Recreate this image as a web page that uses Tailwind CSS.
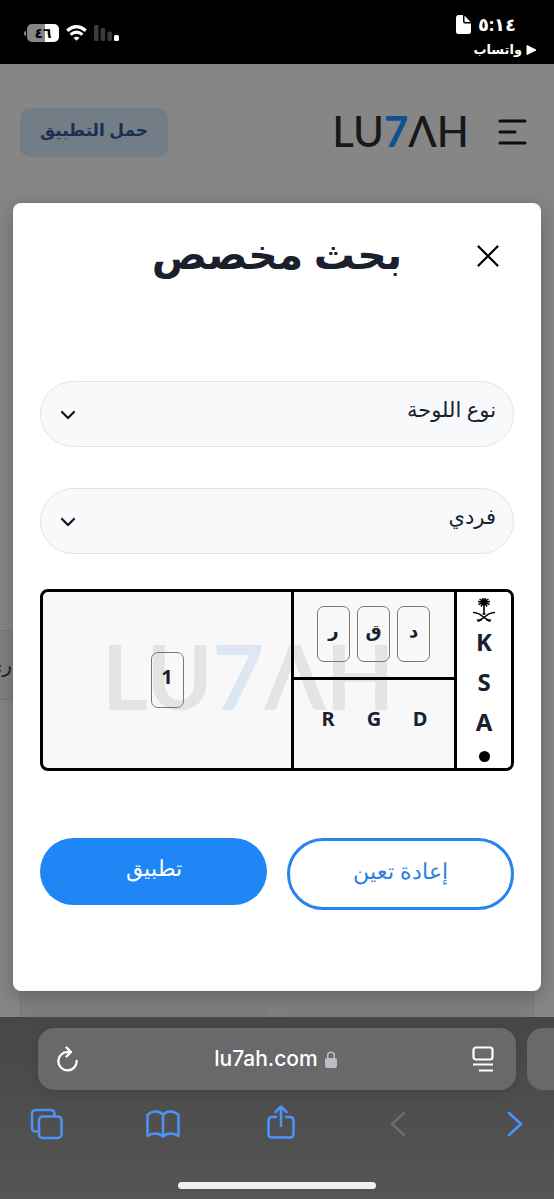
<!DOCTYPE html>
<html lang="ar" dir="rtl">
<head>
<meta charset="utf-8">
<meta name="viewport" content="width=device-width, initial-scale=1">
<title>بحث مخصص</title>
<script src="https://cdn.jsdelivr.net/npm/@tailwindcss/browser@4"></script>
</head>
<body class="flex min-h-screen flex-col bg-[#868686] font-['Noto_Sans','DejaVu_Sans',sans-serif] text-[#1a202c]">

<!-- Status bar -->
<div class="flex h-16 items-start justify-between bg-black pr-[17px] pl-6 text-white">
  <div class="flex flex-col items-start pt-2">
    <div class="flex h-7 items-center gap-[7px] pt-1 pr-[21px]">
      <span class="text-lg leading-7 font-bold">٥:١٤</span>
      <svg class="h-[19px] w-[15px]" viewBox="0 0 15 19" fill="#fff"><path d="M3 0h4v6.500q0 2 2 2h6v8q0 2.500-2.500 2.500h-10Q0 19 0 16.500V3Q0 0 3 0z"/><path d="M8.500 0.500L14.500 7H9.500q-1 0-1-1z"/></svg>
    </div>
    <div class="flex h-7 items-center gap-1">
      <svg class="h-[10px] w-[11px]" viewBox="0 0 11 10" fill="#fff"><path d="M1 .5L10 5L1 9.500z" stroke="#fff" stroke-linejoin="round"/></svg>
      <span class="text-[13px] font-bold">واتساب</span>
    </div>
  </div>
  <div class="flex h-16 items-center gap-[7px] pt-[2px]" dir="ltr">
    <div class="flex items-center gap-px">
      <span class="h-[5px] w-[2px] rounded-l bg-[#868686]"></span>
      <span class="flex h-[18px] w-8 items-center justify-center rounded-[5px] bg-linear-to-r from-[#868686] from-55% to-white to-55% text-sm font-bold text-black">٤٦</span>
    </div>
    <svg class="h-4 w-[21px]" viewBox="0 0 21 16" fill="none" stroke="#fff" stroke-width="3.200"><path d="M1.200 5.700Q10.500-2.300 19.800 5.700M4.600 9.600Q10.500 4.600 16.400 9.600"/><path d="M7.500 12.700Q10.500 10.600 13.500 12.700L10.500 15.800z" fill="#fff" stroke="none"/></svg>
    <svg class="h-4 w-[25px]" viewBox="0 0 25 16"><g fill="#3b3b3b"><rect width="4.500" height="16" rx="1.500"/><rect x="6.700" y="3" width="4.500" height="13" rx="1.500"/><rect x="13.400" y="6.500" width="4.500" height="9.500" rx="1.500"/></g><rect x="20" y="10" width="5" height="6" rx="1.500" fill="#fff"/></svg>
  </div>
</div>

<!-- Page with open dialog -->
<div class="relative flex-1 pb-[26px]">
  <div class="absolute top-[566px] left-0 flex h-[70px] w-8 items-center border-y border-[#777] bg-[#828282] text-xl whitespace-nowrap" aria-hidden="true"><span class="absolute right-5">ري</span></div>
  <div class="absolute inset-x-5 bottom-0 h-16 border-x border-[#7a7a7a] bg-[#808080] px-3 pt-14"><div class="grid h-2 grid-cols-2 gap-5"><span class="bg-[#7c7c7c]"></span><span class="bg-[#7c7c7c]"></span></div></div>

  <header class="flex h-[139px] items-center justify-between px-5 pb-[3px]">
    <div class="flex items-center gap-[29px] pr-[7px]">
      <button aria-label="القائمة" class="h-[26px] w-[29px]"><svg viewBox="0 0 29 26" fill="none" stroke="#0b0d14" stroke-width="3" stroke-linecap="round"><path d="M2 2h25M2 13h15M2 24h25"/></svg></button>
      <a href="#" dir="ltr" class="pb-[3px] font-['Lato','Inter',sans-serif] text-[42px] leading-[44px] font-medium text-[#181818]">LU<span class="font-bold text-[#104f91]">7</span>ΛH</a>
    </div>
    <button class="h-[49px] w-[148px] rounded-[10px] bg-[#737d86] pb-1 text-[17px] font-bold text-[#19304f]">حمل التطبيق</button>
  </header>

  <main role="dialog" aria-labelledby="title" class="relative mx-[13px] rounded-lg bg-white px-[27px] pb-[81px] shadow-[0_5px_20px_rgba(0,0,0,0.25)]">
    <div class="grid h-[178px] grid-cols-[52px_1fr_52px] items-start pt-[25px]">
      <button aria-label="إغلاق" class="flex h-14 items-center justify-center"><svg class="size-[22px]" viewBox="0 0 22 22" fill="none" stroke="#000" stroke-width="2.200" stroke-linecap="round"><path d="M1.500 1.500l19 19M20.500 1.500L1.500 20.500"/></svg></button>
      <h1 id="title" class="text-center text-[41px] leading-[50px] font-bold">بحث مخصص</h1>
    </div>

    <form>
      <div class="relative">
        <select aria-label="نوع اللوحة" class="h-[66px] w-full appearance-none rounded-full border border-[#e2e4ea] bg-[#f7f9fb] pr-[17px] pb-2 pl-12 text-[21px]"><option>نوع اللوحة</option></select>
        <svg class="pointer-events-none absolute top-[29px] left-5 h-[10px] w-4" viewBox="0 0 16 10" fill="none" stroke="#11141c" stroke-width="2.200" stroke-linecap="round" stroke-linejoin="round"><path d="M2 2l6 6 6-6"/></svg>
      </div>
      <div class="relative mt-[41px]">
        <select aria-label="الفئة" class="h-[66px] w-full appearance-none rounded-full border border-[#e2e4ea] bg-[#f7f9fb] pr-[17px] pb-2 pl-12 text-[21px]"><option>فردي</option></select>
        <svg class="pointer-events-none absolute top-[29px] left-5 h-[10px] w-4" viewBox="0 0 16 10" fill="none" stroke="#11141c" stroke-width="2.200" stroke-linecap="round" stroke-linejoin="round"><path d="M2 2l6 6 6-6"/></svg>
      </div>

      <!-- Licence plate -->
      <div dir="ltr" class="relative mt-[35px] grid h-[182px] grid-cols-[minmax(0,1fr)_163px_57px] overflow-hidden rounded-lg border-3 border-black bg-[#f8f8f8] font-bold">
        <div class="pointer-events-none absolute top-[40px] left-[59px] font-['Lato','Inter',sans-serif] text-[89px] leading-[88px] font-bold text-black/8" aria-hidden="true">LU<span class="text-[#1d76c5]/12">7</span>ΛH</div>
        <div class="relative flex items-center justify-center">
          <input aria-label="الأرقام" value="1" class="h-14 w-[33px] rounded-[7px] border border-[#777] bg-transparent pb-2 text-center text-xl">
        </div>
        <div class="relative grid grid-rows-[88px_1fr] border-l-3 border-black">
          <div class="flex items-center justify-center gap-[7px] border-b-3 border-black pr-px pb-px">
            <input aria-label="الحرف الثالث" value="ر" class="h-14 w-[33px] rounded-[7px] border border-[#777] bg-transparent pb-2 text-center text-lg">
            <input aria-label="الحرف الثاني" value="ق" class="h-14 w-[33px] rounded-[7px] border border-[#777] bg-transparent pb-2 text-center text-lg">
            <input aria-label="الحرف الأول" value="د" class="h-14 w-[33px] rounded-[7px] border border-[#777] bg-transparent pb-2 text-center text-lg">
          </div>
          <div class="flex items-center justify-center gap-5 pb-[10px] text-center text-xl"><span class="w-[26px]">R</span><span class="w-[26px]">G</span><span class="w-[26px]">D</span></div>
        </div>
        <div class="relative flex flex-col items-center border-l-3 border-black bg-white pt-[6px] text-2xl leading-10">
          <svg class="h-6 w-[22px] shrink-0" viewBox="0 0 22 24" fill="none" stroke="#000"><path d="M11 5v11" stroke-width="1.600"/><path d="M11 4L5 3.500M11 4L5.500 6.500M11 4L8 8.500M11 4L6.500 1M11 4L9.500 0M11 4L12.500 0M11 4L15.500 1M11 4L17 3.500M11 4L16.500 6.500M11 4L14 8.500" stroke-width="1.400"/><circle cx="11" cy="4" r="3.300" fill="#000" stroke="none"/><path d="M9.500 16h3" stroke-width="1.500"/><path d="M0 14.500Q5 14.500 9 18T16.500 22.500M22 14.500Q17 14.500 13 18T5.500 22.500" stroke-width="1.600"/><path d="M4 21.500l2.500 2M18 21.500l-2.500 2M9 21.500l-4.500 1.500M13 21.500l4.500 1.500" stroke-width="1.400"/></svg>
          <span>K</span><span>S</span><span>A</span>
          <i class="mt-[9px] size-[11px] shrink-0 rounded-full bg-black"></i>
        </div>
      </div>

      <div class="mt-[67px] grid grid-cols-2 items-start gap-5">
        <button type="reset" class="h-[72px] rounded-full border-3 border-[#2684ec] pb-2 text-[22px] font-light text-[#2b7fe0]">إعادة تعين</button>
        <button type="button" class="h-[67px] rounded-full bg-[#1e86f5] pb-2 text-[22px] font-light text-white">تطبيق</button>
      </div>
    </form>
  </main>
</div>

<!-- Browser toolbar -->
<footer dir="ltr" class="relative flex h-[182px] flex-col overflow-hidden bg-linear-to-b from-[#474749] to-[#555] pt-[11px]">
  <div class="flex gap-[11px] pl-[38px]">
    <div class="flex h-[62px] flex-1 items-center justify-between rounded-2xl bg-[#69696b] px-[18px] text-white shadow-[0_2px_12px_rgba(0,0,0,0.15)]">
      <button aria-label="إعادة التحميل"><svg class="h-[26px] w-[23px]" viewBox="0 0 23 26" fill="none" stroke="#fff" stroke-width="2.300" stroke-linecap="round" stroke-linejoin="round"><path d="M15 6H11.500A9.200 9.200 0 1 0 20.700 15M10.500 1.500L15 6L10.500 10.500"/></svg></button>
      <div class="flex items-center gap-[7px] font-['Inter',sans-serif] text-[21px] font-medium">lu7ah.com
        <svg class="h-[17px] w-3" viewBox="0 0 12 17"><rect y="7" width="12" height="10" rx="2" fill="#bcbcc2"/><path d="M2.700 8V4.500a3.300 3.300 0 0 1 6.600 0V8" fill="none" stroke="#bcbcc2" stroke-width="1.500"/></svg>
      </div>
      <button aria-label="إعدادات الصفحة" class="mr-1"><svg class="h-[26px] w-[22px]" viewBox="0 0 22 26" fill="none" stroke="#fff" stroke-width="2.200"><rect x="1.500" y="1.500" width="19" height="12" rx="2.500"/><path d="M1 18.500h20M7 24.500h14"/></svg></button>
    </div>
    <div class="h-[62px] w-[27px] rounded-l-2xl bg-[#69696b]"></div>
  </div>
  <nav class="mt-4 flex h-9 items-center justify-between pr-[22px] pl-[29px]">
    <button class="flex w-[34px] justify-center" aria-label="علامات التبويب"><svg class="h-8 w-[33px]" viewBox="0 0 33 32" fill="none" stroke="#4b93f8" stroke-width="2.500"><path d="M8.500 23.500H6Q2 23.500 2 19.500V6Q2 2 6 2H20.500Q24.500 2 24.500 6V8.500"/><rect x="9" y="8.500" width="22.500" height="21.500" rx="3.500"/></svg></button>
    <button class="flex w-[34px] justify-center" aria-label="الإشارات"><svg class="h-7 w-[34px]" viewBox="0 0 34 28" fill="none" stroke="#4b93f8" stroke-width="2.500" stroke-linejoin="round"><path d="M17 4.500Q14 1.500 9.500 1.500T1.500 5V26Q5 23.500 9.500 23.500T17 26.500Q20 23.500 24.500 23.500T32.500 26V5Q29 1.500 24.500 1.500T17 4.500zV26"/></svg></button>
    <button class="flex w-[34px] justify-center" aria-label="مشاركة"><svg class="mb-1 h-[34px] w-7" viewBox="0 0 28 34" fill="none" stroke="#4b93f8" stroke-width="2.500" stroke-linecap="round" stroke-linejoin="round"><path d="M9 12H5Q1.500 12 1.500 15.500V29Q1.500 32.500 5 32.500H23Q26.500 32.500 26.500 29V15.500Q26.500 12 23 12H19M14 21V2M8.500 7L14 1.500L19.500 7"/></svg></button>
    <button class="flex w-[34px] justify-center" aria-label="السابق" disabled><svg class="h-[26px] w-4" viewBox="0 0 16 26" fill="none" stroke="#6b6b6b" stroke-width="2.700" stroke-linecap="round" stroke-linejoin="round"><path d="M14 2L2 13l12 11"/></svg></button>
    <button class="flex w-[34px] justify-center" aria-label="التالي"><svg class="h-[26px] w-4" viewBox="0 0 16 26" fill="none" stroke="#4b93f8" stroke-width="2.700" stroke-linecap="round" stroke-linejoin="round"><path d="M2 2l12 11L2 24"/></svg></button>
  </nav>
  <div class="mx-auto mt-auto mb-[10px] h-[7px] w-[198px] rounded-full bg-[#f0f0f0]"></div>
</footer>
</body>
</html>
